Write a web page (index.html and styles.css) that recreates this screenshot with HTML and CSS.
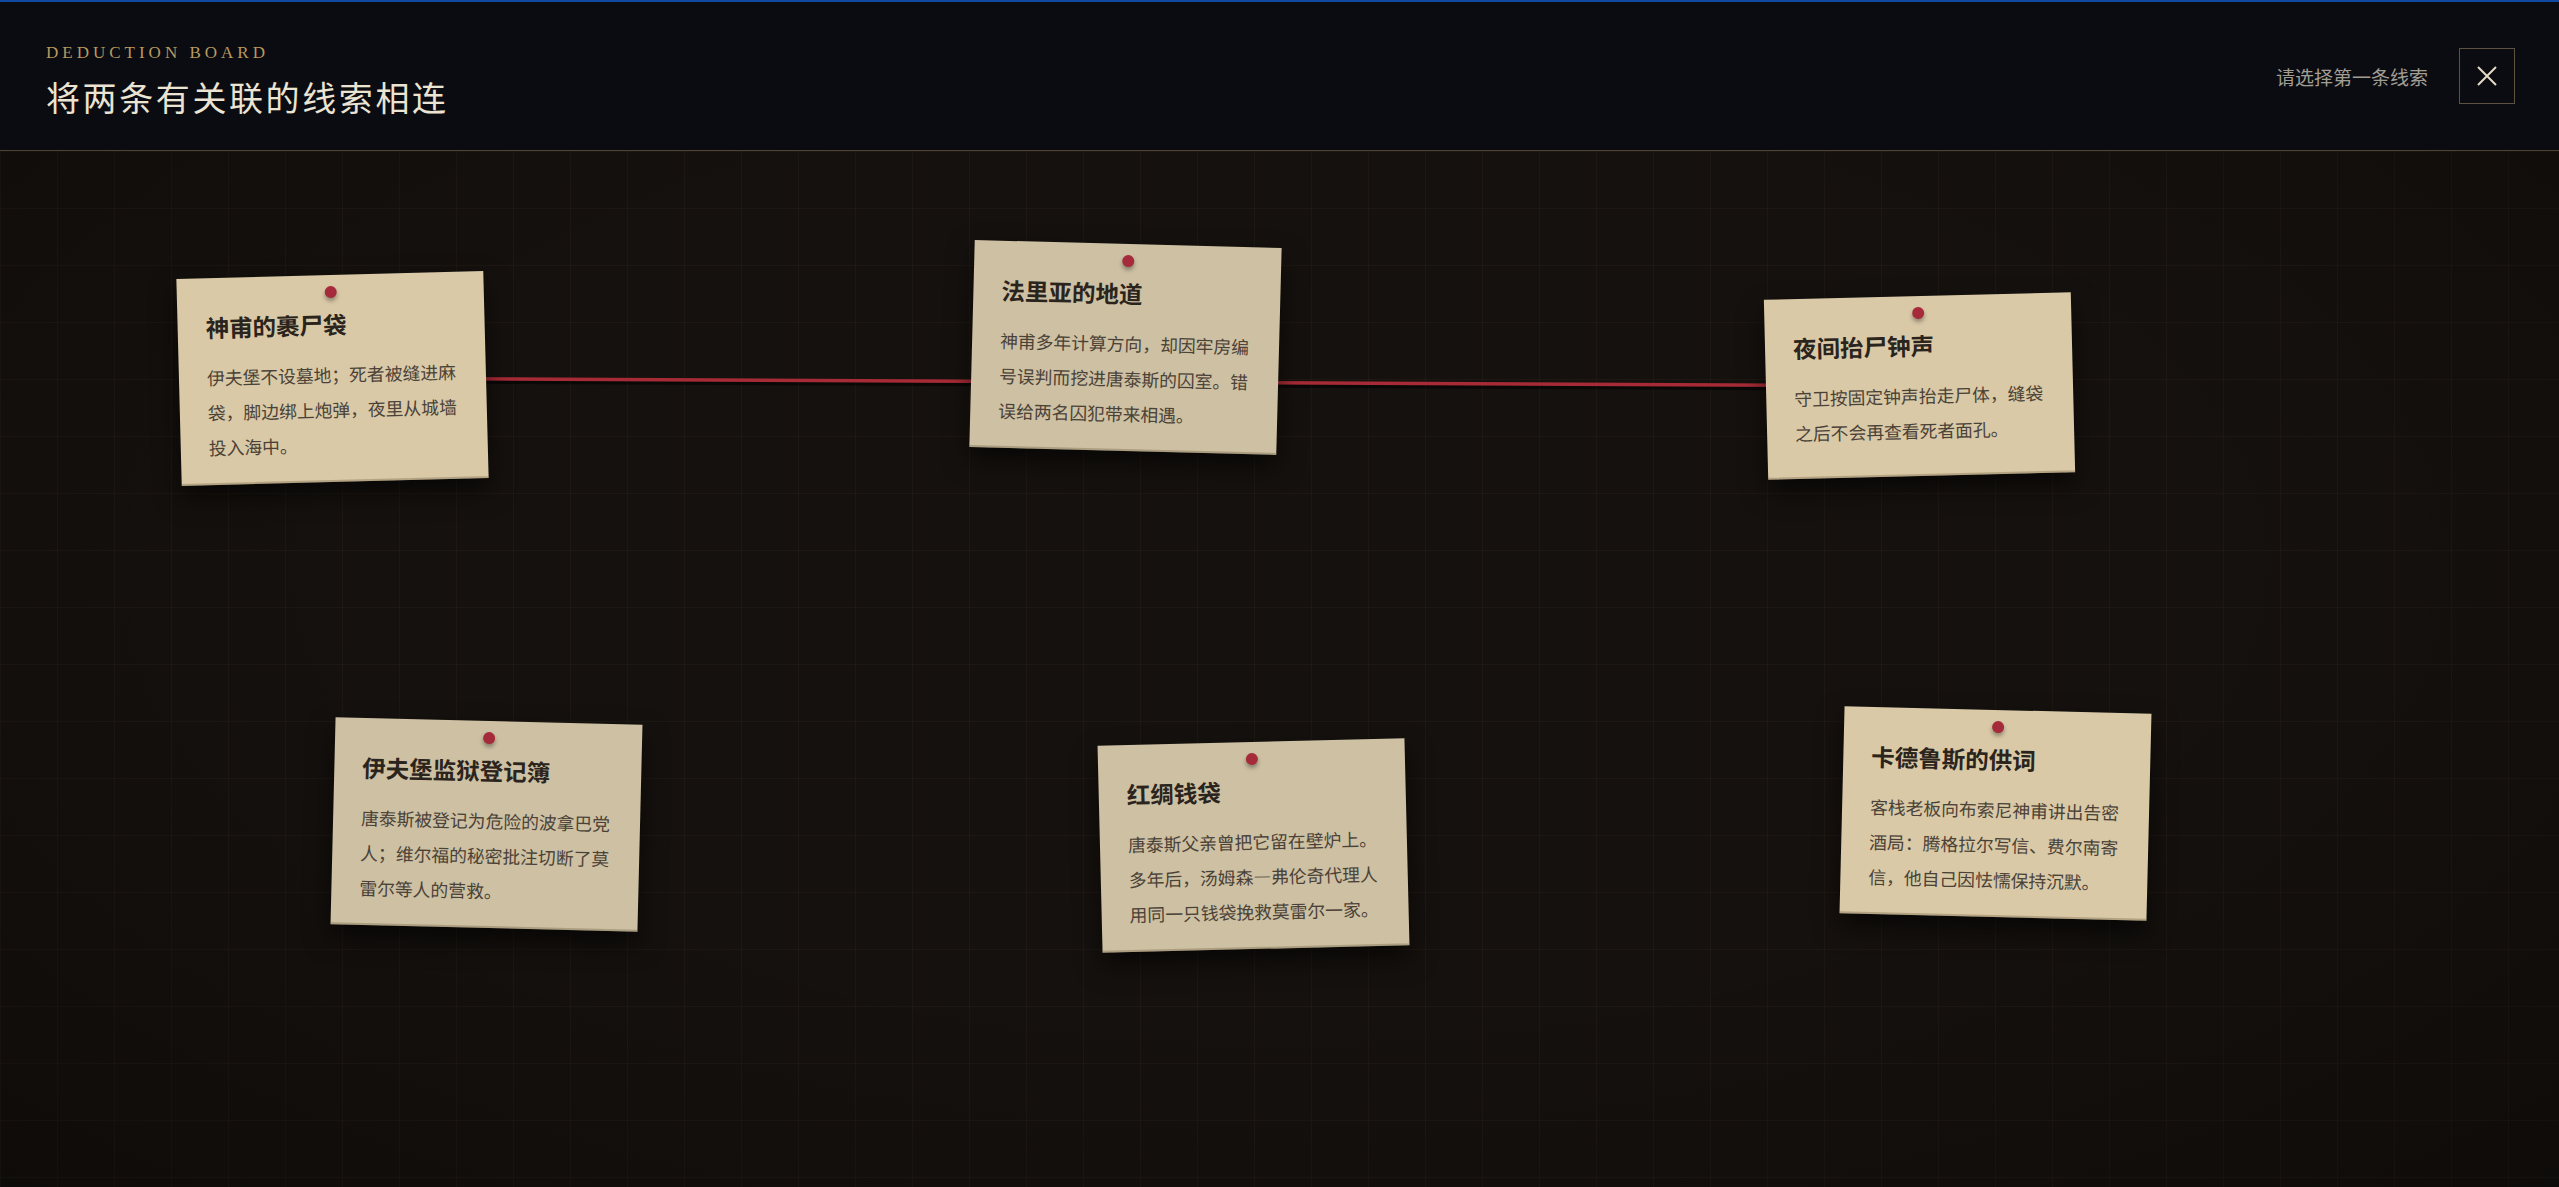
FILE: index.html
```html
<!DOCTYPE html>
<html lang="zh-CN">
<head>
    <meta charset="UTF-8">
    <meta name="viewport" content="width=device-width, initial-scale=1.0">
    <title>Deduction Board</title>
    <link rel="stylesheet" href="styles.css">
</head>
<body>
    <header class="topbar">
        <div class="heading">
            <div class="eyebrow">DEDUCTION BOARD</div>
            <h1 class="title">将两条有关联的线索相连</h1>
        </div>
        <div class="actions">
            <span class="status">请选择第一条线索</span>
            <button type="button" class="close" aria-label="关闭">
                <svg width="20" height="20" viewBox="0 0 20 20">
                    <path d="M1 1 L19 19 M19 1 L1 19" stroke="#e6dcc6" stroke-width="2" fill="none"/>
                </svg>
            </button>
        </div>
    </header>

    <main class="board">
        <!-- strings between linked clues -->
        <svg class="strings" width="100%" height="100%">
            <line x1="333" y1="227" x2="1919" y2="235" class="string-shadow"/>
            <line x1="333" y1="227" x2="1919" y2="235" class="string"/>
        </svg>

        <div class="card light" style="left: 7%; top: 12%; --tilt: -1.5deg;">
            <span class="pin"></span>
            <h2>神甫的裹尸袋</h2>
            <p>伊夫堡不设墓地；死者被缝进麻袋，脚边绑上炮弹，夜里从城墙投入海中。</p>
        </div>
        <div class="card grey" style="left: 38%; top: 9%; --tilt: 1.5deg;">
            <span class="pin"></span>
            <h2>法里亚的地道</h2>
            <p>神甫多年计算方向，却因牢房编号误判而挖进唐泰斯的囚室。错误给两名囚犯带来相遇。</p>
        </div>
        <div class="card light" style="left: 69%; top: 14%; --tilt: -1.4deg;">
            <span class="pin"></span>
            <h2>夜间抬尸钟声</h2>
            <p>守卫按固定钟声抬走尸体，缝袋之后不会再查看死者面孔。</p>
        </div>
        <div class="card grey" style="left: 13%; top: 55%; --tilt: 1.4deg;">
            <span class="pin"></span>
            <h2>伊夫堡监狱登记簿</h2>
            <p>唐泰斯被登记为危险的波拿巴党人；维尔福的秘密批注切断了莫雷尔等人的营救。</p>
        </div>
        <div class="card grey" style="left: 43%; top: 57%; --tilt: -1.4deg;">
            <span class="pin"></span>
            <h2>红绸钱袋</h2>
            <p>唐泰斯父亲曾把它留在壁炉上。多年后，汤姆森—弗伦奇代理人用同一只钱袋挽救莫雷尔一家。</p>
        </div>
        <div class="card light" style="left: 72%; top: 54%; --tilt: 1.4deg;">
            <span class="pin"></span>
            <h2>卡德鲁斯的供词</h2>
            <p>客栈老板向布索尼神甫讲出告密酒局：腾格拉尔写信、费尔南寄信，他自己因怯懦保持沉默。</p>
        </div>
    </main>
</body>
</html>
```

FILE: styles.css
```css
html, body {
    margin: 0;
    height: 100%;
}
body {
    background: #0b0c12;
    font-family: "Noto Sans CJK SC", "Noto Sans", sans-serif;
    display: flex;
    flex-direction: column;
    overflow: hidden;
}

/* top bar */
.topbar {
    flex: none;
    height: 148px;
    border-top: 2px solid #0f4aa3;
    border-bottom: 1px solid #4d4433;
    background: #0b0c12;
    padding: 0 44px 0 46px;
    display: flex;
    align-items: center;
    justify-content: space-between;
}
.heading {
    padding-top: 9px;
}
.eyebrow {
    font-family: "Liberation Serif", serif;
    font-size: 17px;
    line-height: 20px;
    letter-spacing: 4px;
    color: #b8995c;
}
.title {
    margin: 12px 0 0;
    font-size: 34px;
    line-height: 44px;
    font-weight: 400;
    letter-spacing: 2.6px;
    color: #ece4d2;
}
.actions {
    display: flex;
    align-items: center;
    gap: 31px;
}
.status {
    font-size: 19px;
    color: #a39e94;
}
.close {
    width: 56px;
    height: 56px;
    padding: 0;
    border: 1px solid #5c523f;
    background: transparent;
    display: flex;
    align-items: center;
    justify-content: center;
    cursor: pointer;
}

/* cork board */
.board {
    flex: 1;
    position: relative;
    background-color: #15110e;
    background-image:
        linear-gradient(rgba(170, 130, 80, 0.06) 1px, transparent 1px),
        linear-gradient(90deg, rgba(170, 130, 80, 0.06) 1px, transparent 1px);
    background-size: 57px 57px;
    overflow: hidden;
}
.board::after {
    content: "";
    position: absolute;
    inset: 0;
    background: radial-gradient(ellipse at 50% 40%, rgba(0, 0, 0, 0) 50%, rgba(0, 0, 0, 0.32) 100%);
    pointer-events: none;
}
.strings {
    position: absolute;
    inset: 0;
}
.string {
    stroke: #a72b36;
    stroke-width: 3.5;
}
.string-shadow {
    stroke: rgba(0, 0, 0, 0.5);
    stroke-width: 6;
    transform: translateY(2px);
}

.card {
    position: absolute;
    z-index: 1;
    width: 12%;
    min-height: 180px;
    box-sizing: border-box;
    padding: 34px 28px 20px;
    transform: rotate(var(--tilt));
    box-shadow: 0 12px 26px rgba(0, 0, 0, 0.6), inset 0 -2px 0 rgba(70, 50, 20, 0.25);
    cursor: pointer;
}
.card.light {
    background: #d9c9a7;
}
.card.grey {
    background: #cdc0a3;
}
.pin {
    position: absolute;
    top: 11px;
    left: 50%;
    width: 12px;
    height: 12px;
    margin-left: -6px;
    border-radius: 50%;
    background: #a52a3a;
    box-shadow: 0 3px 4px rgba(0, 0, 0, 0.35);
}
.card h2 {
    margin: 0;
    font-size: 23.5px;
    line-height: 30px;
    font-weight: 700;
    color: #2b241c;
}
.card p {
    margin: 17.5px 0 0;
    font-size: 17.8px;
    line-height: 35px;
    color: #4b4237;
}
```
